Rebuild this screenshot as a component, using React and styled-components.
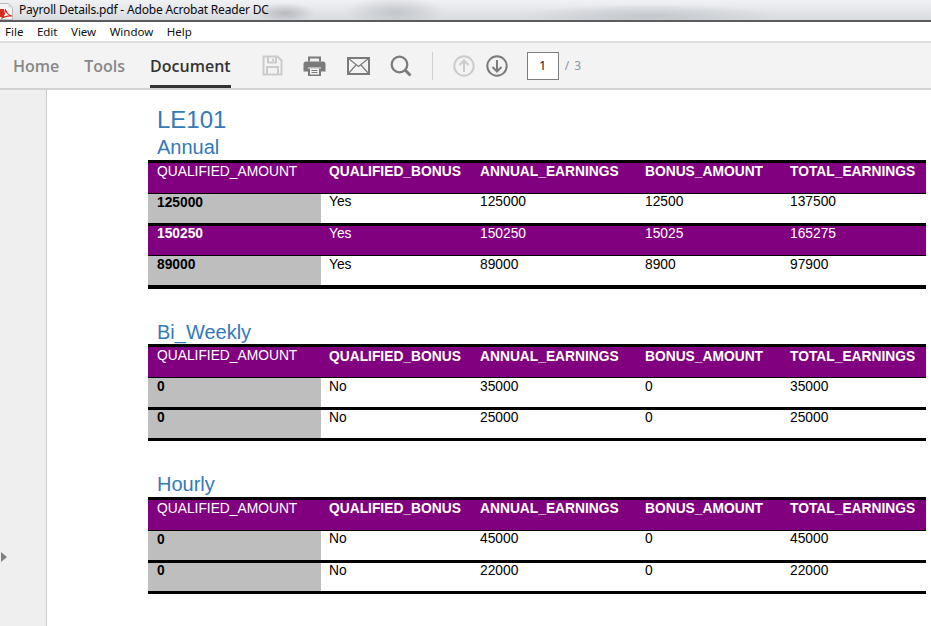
import React from "react";
import styled, { createGlobalStyle } from "styled-components";

const Global = createGlobalStyle`
  html, body { margin: 0; padding: 0; background: #fff; overflow: hidden; }
  * { box-sizing: border-box; }
`;

const Page = styled.div`
  width: 931px;
  height: 626px;
  display: flex;
  flex-direction: column;
  overflow: hidden;
  font-family: "Noto Sans", sans-serif;
`;

const TitleBar = styled.div`
  height: 22px;
  flex: none;
  display: flex;
  align-items: flex-start;
  overflow: hidden;
  border-bottom: 2px solid #5a5c60;
  background:
    radial-gradient(ellipse 30px 10px at 285px 13px, rgba(150,152,156,.55), transparent),
    radial-gradient(ellipse 50px 16px at 395px 12px, rgba(170,174,180,.55), transparent),
    radial-gradient(ellipse 130px 12px at 650px 16px, rgba(170,174,180,.5), transparent),
    linear-gradient(#f0f1f3, #d8dbdf);
`;

const TitleIcon = styled.svg`
  width: 13px;
  height: 17px;
  margin: 3px 6px 0 0;
  flex: none;
`;

const TitleText = styled.span`
  font-size: 12px;
  line-height: 20px;
  color: #0a0a0a;
  white-space: nowrap;
  letter-spacing: -0.19px;
`;

const MenuBar = styled.div`
  height: 21px;
  flex: none;
  display: flex;
  align-items: center;
  padding-left: 5px;
  gap: 13.5px;
  background: #fff;
  border-bottom: 2px solid #dedede;
`;

const MenuItem = styled.span`
  font-size: 11.5px;
  color: #111;
`;

const Toolbar = styled.div`
  height: 47px;
  flex: none;
  display: flex;
  align-items: stretch;
  background: #f3f3f3;
  border-bottom: 2px solid #d2d2d2;
  padding-left: 13px;
`;

const Tab = styled.div`
  display: flex;
  align-items: center;
  height: 45px;
  margin-right: ${(p) => p.$gap}px;
  font-family: "Open Sans", sans-serif;
  font-size: 16px;
  font-weight: 600;
  padding-top: 4px;
  color: ${(p) => (p.$active ? "#333" : "#888")};
  border-bottom: 3px solid ${(p) => (p.$active ? "#333" : "transparent")};
`;

const ToolIcon = styled.svg`
  flex: none;
  align-self: center;
  margin-left: ${(p) => p.$gap}px;
  color: ${(p) => (p.$off ? "#cbcbcb" : "#7b7b7b")};
`;

const Divider = styled.div`
  width: 1px;
  height: 28px;
  align-self: center;
  margin: 0 20px 0 20px;
  background: #cfcfcf;
`;

const PageBox = styled.div`
  width: 32px;
  height: 28px;
  align-self: center;
  margin-left: 19px;
  display: flex;
  align-items: center;
  justify-content: center;
  background: #fff;
  border: 1px solid #7d7d7d;
  font-size: 12px;
  color: #111;
`;

const PageTotal = styled.span`
  align-self: center;
  margin-left: 6px;
  font-size: 12px;
  letter-spacing: 1px;
  color: #8d95a5;
  white-space: pre;
`;

const Workspace = styled.div`
  flex: 1;
  display: flex;
  min-height: 0;
`;

const Rail = styled.div`
  width: 47px;
  flex: none;
  background: #efefef;
  border-right: 1px solid #cdcdcd;
  padding: 462px 0 0 1px;
`;

const RailArrow = styled.div`
  width: 0;
  height: 0;
  border-left: 6px solid #808080;
  border-top: 5px solid transparent;
  border-bottom: 5px solid transparent;
`;

const Sheet = styled.div`
  flex: 1;
  background: #fff;
  padding: 16px 5px 0 101px;
  font-family: "Liberation Sans", Arial, sans-serif;
`;

const DocTitle = styled.div`
  font-size: 24px;
  line-height: 28px;
  color: #337ab7;
  padding-left: 9px;
`;

const Heading = styled.div`
  font-size: 20px;
  line-height: 18px;
  padding-bottom: ${(p) => p.$tail}px;
  color: #337ab7;
  padding-left: 9px;
  margin-top: ${(p) => p.$top}px;
`;

const Table = styled.div`
  border-top: 3px solid #000;
`;

const Row = styled.div`
  display: grid;
  grid-template-columns: 173px 151px 165px 145px 144px;
  height: ${(p) => p.$h}px;
  box-sizing: content-box;
  border-bottom: ${(p) => p.$rule}px solid #000;
  background: ${(p) => (p.$purple ? "#800080" : "#fff")};
  color: ${(p) => (p.$purple ? "#fff" : "#000")};
`;

const Cell = styled.div`
  font-size: 13.8px;
  line-height: 16px;
  padding-left: 8px;
  padding-top: ${(p) => p.$nudge || 0}px;
  font-weight: ${(p) => (p.$bold ? 700 : 400)};
  white-space: nowrap;
`;

const KeyCell = styled(Cell)`
  padding-left: 9px;
  background: ${(p) => (p.$purple ? "transparent" : "#bebebe")};
`;

const HEAD = ["QUALIFIED_BONUS", "ANNUAL_EARNINGS", "BONUS_AMOUNT", "TOTAL_EARNINGS"];

const sections = [
  {
    title: "Annual", top: 4, tail: 4, headH: 30, headKey: 1, headNudge: 1,
    rows: [
      { v: ["125000", "Yes", "125000", "12500", "137500"], h: 29, rule: 3, key: 1, nudge: 0 },
      { v: ["150250", "Yes", "150250", "15025", "165275"], h: 29, rule: 1, purple: true, key: 0, nudge: 0 },
      { v: ["89000", "Yes", "89000", "8900", "97900"], h: 29, rule: 4, key: 1, nudge: 1 },
    ],
  },
  {
    title: "Bi_Weekly", top: 34, tail: 3, headH: 30, headKey: 1, headNudge: 2,
    rows: [
      { v: ["0", "No", "35000", "0", "35000"], h: 29, rule: 3, key: 1, nudge: 1 },
      { v: ["0", "No", "25000", "0", "25000"], h: 28, rule: 3, key: 0, nudge: 0 },
    ],
  },
  {
    title: "Hourly", top: 34, tail: 4, headH: 30, headKey: 1, headNudge: 1,
    rows: [
      { v: ["0", "No", "45000", "0", "45000"], h: 29, rule: 3, key: 1, nudge: 0 },
      { v: ["0", "No", "22000", "0", "22000"], h: 28, rule: 3, key: 0, nudge: 0 },
    ],
  },
];

const PdfIcon = () => (
  <TitleIcon viewBox="0 0 13 17">
    <path d="M-2 .5H8.500l4 4V16.500H-2z" fill="#f4f4f4" stroke="#b9b9b9" />
    <path d="M8.500.5v4h4z" fill="#d9d9d9" />
    <path d="M-2 6H4v8H-2z" fill="#d62a20" />
    <path d="M2 15c2-3 3.500-6 3.500-9 .5 3 2.500 6 6.500 7-3.500-.5-7 .5-10 2z" fill="none" stroke="#d62a20" strokeWidth="1.100" />
  </TitleIcon>
);

const SaveIcon = () => (
  <ToolIcon $gap={31} $off width="21" height="21" viewBox="0 0 21 21" fill="none" stroke="currentColor" strokeWidth="2">
    <path d="M1.500 1.500h14l4 4v14h-18z" />
    <path d="M6 1.500v6h8v-6M11 3.500v2.500" />
    <path d="M5 19.500v-7.500h11v7.500" />
  </ToolIcon>
);

const PrintIcon = () => (
  <ToolIcon $gap={20} width="23" height="22" viewBox="0 0 23 22">
    <path d="M5 1.500h13v5h-2V3.500H7v3H5z" fill="currentColor" />
    <path d="M3 6.500h17a2.500 2.500 0 0 1 2.500 2.500v7.500H18v-4H5v4H.5V9A2.500 2.500 0 0 1 3 6.500z" fill="currentColor" />
    <path d="M5 13.500h13V21H5z" fill="currentColor" />
    <path d="M7 13.500h9V19.500H7z" fill="#f3f3f3" />
    <path d="M8.500 15.500h6M8.500 17.500h6" stroke="currentColor" strokeWidth="1" />
  </ToolIcon>
);

const MailIcon = () => (
  <ToolIcon $gap={21} width="23" height="18" viewBox="0 0 23 18" fill="none" stroke="currentColor">
    <rect x="1" y="1" width="21" height="16" strokeWidth="2" />
    <path d="M1.500 1.500l10 8 10-8M1.500 16.500l7.500-8.500M21.500 16.500l-7.500-8.500" strokeWidth="1.200" />
  </ToolIcon>
);

const SearchIcon = () => (
  <ToolIcon $gap={20} width="22" height="22" viewBox="0 0 22 22" fill="none" stroke="currentColor">
    <circle cx="9.500" cy="9.500" r="7.800" strokeWidth="2.300" />
    <path d="M15 15l5.500 5.500" strokeWidth="3" />
  </ToolIcon>
);

const ArrowIcon = ({ down, off, gap }) => (
  <ToolIcon $gap={gap} $off={off} width="22" height="22" viewBox="0 0 22 22" fill="none" stroke="currentColor">
    <circle cx="11" cy="11" r="9.700" strokeWidth="2" />
    <path
      d={down ? "M11 5v11.500M6.500 12l4.500 4.500 4.500-4.500" : "M11 17V5.500M6.500 10l4.500-4.500 4.500 4.500"}
      strokeWidth="2"
    />
  </ToolIcon>
);

export default function App() {
  return (
    <Page>
      <Global />
      <TitleBar>
        <PdfIcon />
        <TitleText>Payroll Details.pdf - Adobe Acrobat Reader DC</TitleText>
      </TitleBar>
      <MenuBar>
        {["File", "Edit", "View", "Window", "Help"].map((m) => (
          <MenuItem key={m}>{m}</MenuItem>
        ))}
      </MenuBar>
      <Toolbar>
        <Tab $gap={25}>Home</Tab>
        <Tab $gap={25}>Tools</Tab>
        <Tab $active $gap={0}>Document</Tab>
        <SaveIcon />
        <PrintIcon />
        <MailIcon />
        <SearchIcon />
        <Divider />
        <ArrowIcon off gap={0} />
        <ArrowIcon down gap={11} />
        <PageBox>1</PageBox>
        <PageTotal>/ 3</PageTotal>
      </Toolbar>
      <Workspace>
        <Rail>
          <RailArrow />
        </Rail>
        <Sheet>
          <DocTitle>LE101</DocTitle>
          {sections.map((s) => (
            <React.Fragment key={s.title}>
              <Heading $top={s.top} $tail={s.tail}>{s.title}</Heading>
              <Table>
                <Row $purple $h={s.headH} $rule={1}>
                  <KeyCell $purple $nudge={s.headKey}>QUALIFIED_AMOUNT</KeyCell>
                  {HEAD.map((h) => (
                    <Cell key={h} $bold $nudge={s.headNudge}>{h}</Cell>
                  ))}
                </Row>
                {s.rows.map((r, i) => (
                  <Row key={i} $h={r.h} $rule={r.rule} $purple={r.purple}>
                    <KeyCell $bold $purple={r.purple} $nudge={r.key}>{r.v[0]}</KeyCell>
                    {r.v.slice(1).map((c, j) => (
                      <Cell key={j} $nudge={r.nudge}>{c}</Cell>
                    ))}
                  </Row>
                ))}
              </Table>
            </React.Fragment>
          ))}
        </Sheet>
      </Workspace>
    </Page>
  );
}
